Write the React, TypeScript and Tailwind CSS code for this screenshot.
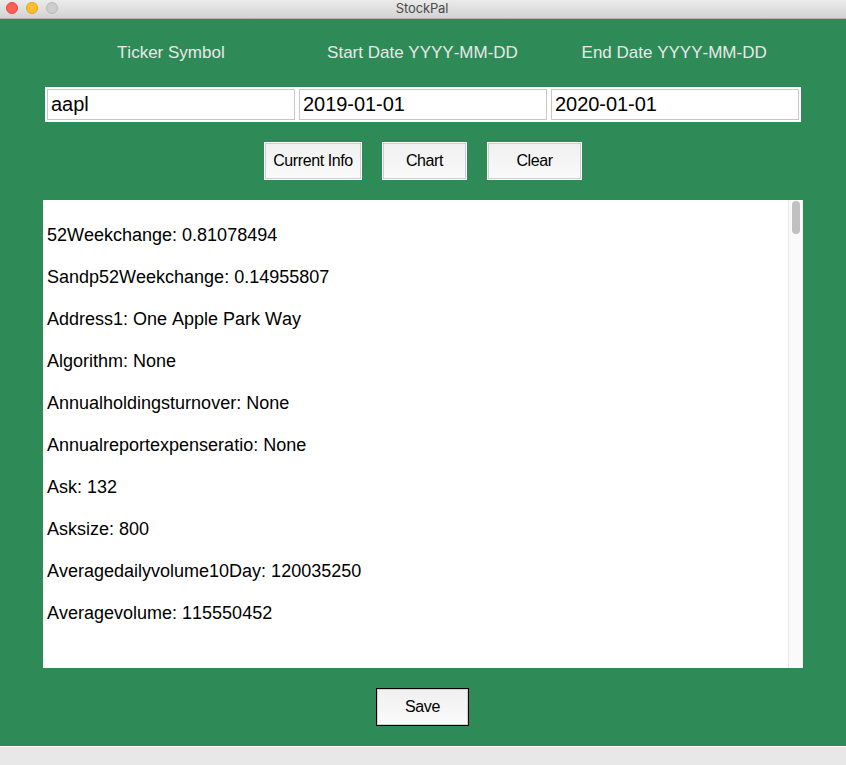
import clsx from "clsx";

const fields = [
  { label: "Ticker Symbol", value: "aapl" },
  { label: "Start Date YYYY-MM-DD", value: "2019-01-01" },
  { label: "End Date YYYY-MM-DD", value: "2020-01-01" },
];

const info = [
  "52Weekchange: 0.81078494",
  "Sandp52Weekchange: 0.14955807",
  "Address1: One Apple Park Way",
  "Algorithm: None",
  "Annualholdingsturnover: None",
  "Annualreportexpenseratio: None",
  "Ask: 132",
  "Asksize: 800",
  "Averagedailyvolume10Day: 120035250",
  "Averagevolume: 115550452",
];

function PushButton({ label, width, focused = false }: { label: string; width: string; focused?: boolean }) {
  return (
    <button
      className={clsx(
        "h-[38px] border bg-white text-[16px] leading-[18px] tracking-[-0.4px] text-black",
        width,
        focused ? "border-black" : "border-white",
      )}
    >
      <span className="flex h-full items-center justify-center whitespace-nowrap border border-[#cfcfcf] bg-linear-to-b from-[#f0f0f0] to-[#fafafa]">
        {label}
      </span>
    </button>
  );
}

function TitleBar() {
  return (
    <header className="grid h-[19px] grid-cols-3 border-b border-[#b1b1b1] bg-linear-to-b from-[#ebebeb] to-[#d3d3d3]">
      <div className="flex gap-2 pl-[6px] pt-[2px]">
        <span className="size-3 rounded-full border border-[#e2463f] bg-[#ff5f57]" />
        <span className="size-3 rounded-full border border-[#e1a325] bg-[#ffbd2e]" />
        <span className="size-3 rounded-full border border-[#b9b9b9] bg-[#cdcdcd]" />
      </div>
      <h1 className="pr-[2px] text-center font-['Inter',sans-serif] text-[13px] leading-[17px] tracking-[-0.15px] text-[#4a4a4a]">
        StockPal
      </h1>
    </header>
  );
}

export default function App() {
  return (
    <div className="flex h-[765px] w-[846px] flex-col overflow-hidden bg-[#2e8b57] font-['Liberation_Sans',Arial,sans-serif] [font-kerning:none]">
      <TitleBar />
      <main className="flex flex-1 flex-col items-center">
        <div className="mt-6 grid w-[756px] grid-cols-3 pr-px text-center text-[17px] leading-[20px] text-[#e8e8e8]">
          {fields.map((f) => (
            <div key={f.label}>{f.label}</div>
          ))}
        </div>
        <div className="mt-6 grid h-[35px] w-[756px] grid-cols-3 gap-x-1 bg-white p-[2px]">
          {fields.map((f) => (
            <input
              key={f.label}
              defaultValue={f.value}
              className="h-[31px] w-full min-w-0 border border-[#c8c8cb] bg-white px-[3px] text-[20px] leading-[23px] tracking-[-0.05px] text-black outline-none"
            />
          ))}
        </div>
        <div className="mt-5 flex gap-5">
          <PushButton label="Current Info" width="w-[98px]" />
          <PushButton label="Chart" width="w-[85px]" />
          <PushButton label="Clear" width="w-[95px]" />
        </div>
        <div className="mt-5 flex h-[468px] w-[760px] bg-white">
          <div className="flex-1 pl-1 pt-[14px] text-[18px] leading-[42px] text-black">
            {info.map((line) => (
              <p key={line}>{line}</p>
            ))}
          </div>
          <div className="w-[15px] border-x border-l-[#e7e7e7] border-r-[#ededed] bg-[#fafafa] pl-[3px] pt-px">
            <div className="h-[33px] w-2 rounded-full bg-[#c1c1c1]" />
          </div>
        </div>
        <div className="mt-5 flex pr-px">
          <PushButton label="Save" width="w-[93px]" focused />
        </div>
      </main>
      <footer className="h-[19px] border-t border-white bg-[#e8e8e8]" />
    </div>
  );
}
